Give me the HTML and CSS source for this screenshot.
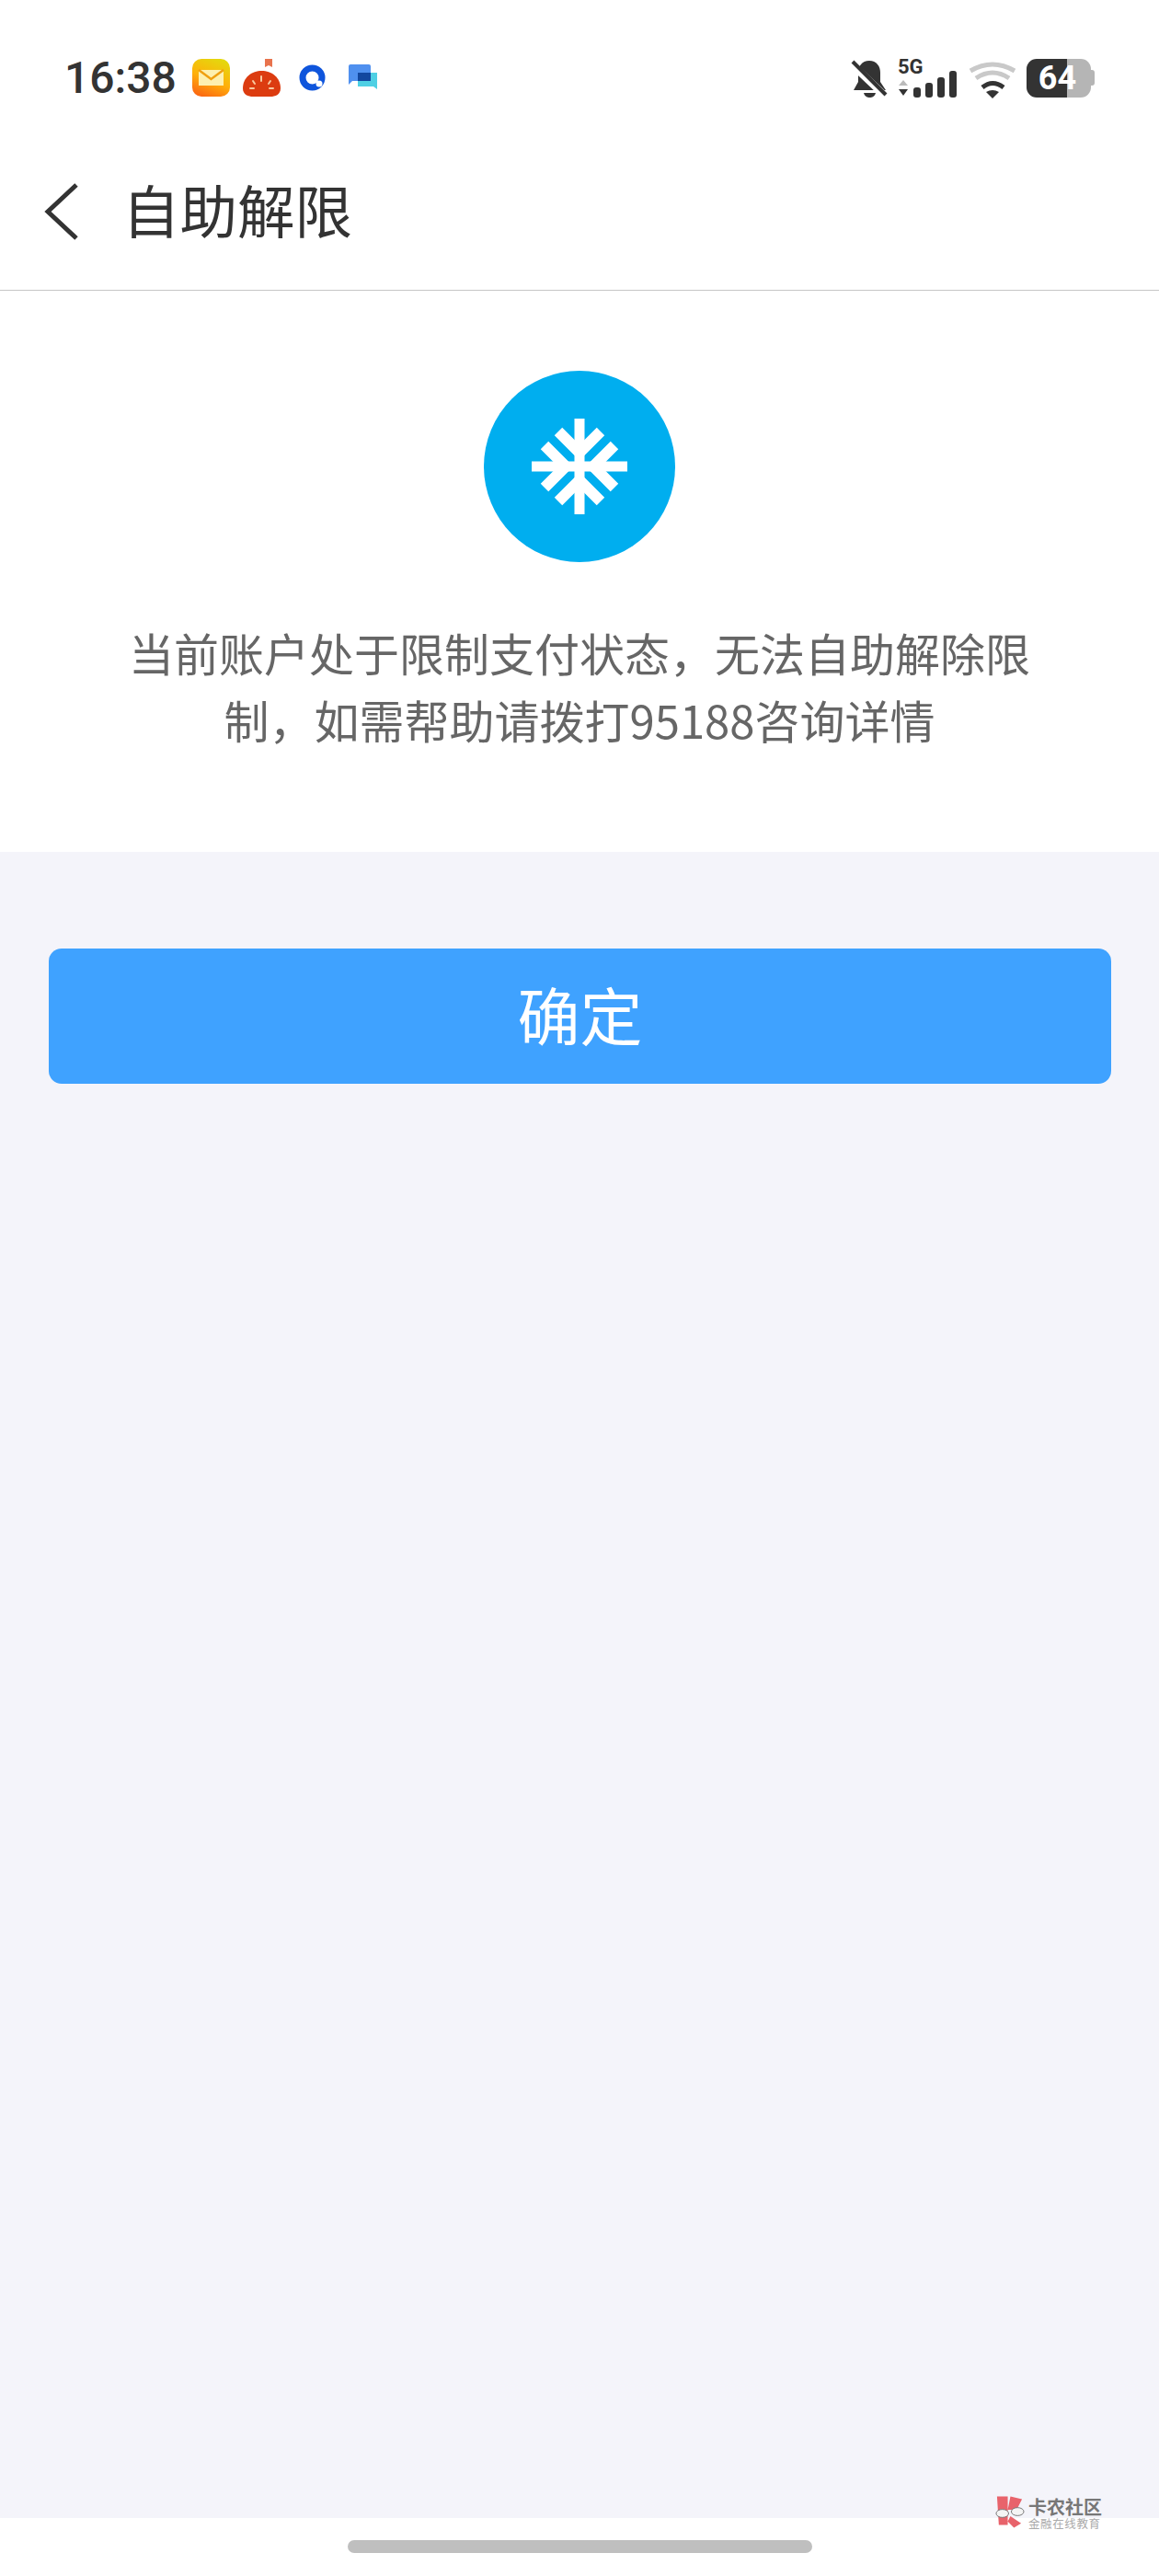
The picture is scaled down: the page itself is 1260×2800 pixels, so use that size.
FILE: index.html
```html
<!doctype html>
<html>
<head>
    <meta charset="utf-8">
    <title>自助解限</title>
    <link rel="stylesheet" href="styles.css">
</head>

<body>
    <div class="status">
        <span class="time">16:38</span>
        <div class="apps">
            <svg class="app" viewBox="0 0 41 41">
                <defs>
                    <linearGradient id="mailbg" x1="0.7" y1="0" x2="0.3" y2="1">
                        <stop offset="0" stop-color="#e4d80e"/>
                        <stop offset="0.55" stop-color="#ffb00a"/>
                        <stop offset="1" stop-color="#fb6a12"/>
                    </linearGradient>
                </defs>
                <rect width="41" height="41" rx="10" fill="url(#mailbg)"/>
                <rect x="7" y="12" width="27" height="17" fill="#fdf0b0"/>
                <path d="M7 12 L20.5 22 L34 12" fill="none" stroke="#f0a010" stroke-width="2.5"/>
            </svg>
            <svg class="app" viewBox="0 0 41 41">
                <path d="M24 0 h8 v9 l-4 -2 l-4 2 z" fill="#e8734d"/>
                <path d="M0 32 C0 20 10 13 20.5 13 C31 13 41 20 41 32 C41 39 35 41 30 41 H11 C6 41 0 39 0 32 Z" fill="#dc3c10"/>
                <path d="M20 19 v5 M11 24 l2 3 M30 24 l-2 3 M8 32 h4 M29 32 h4" stroke="#f8c9a0" stroke-width="2" stroke-linecap="round"/>
            </svg>
            <svg class="app" viewBox="0 0 41 41">
                <circle cx="20.5" cy="20.5" r="10.5" fill="none" stroke="#0f55dc" stroke-width="7"/>
                <circle cx="28" cy="27" r="3.5" fill="#fff"/>
            </svg>
            <svg class="app" viewBox="0 0 41 41">
                <path d="M5 8 Q5 6 7 6 H27 Q29 6 29 8 V24 H9 L5 28 Z" fill="#4f90ef"/>
                <path d="M15 15 H36 V33 L32 30 H15 Z" fill="#4fd0e4"/>
                <path d="M15 15 H29 V24 H15 Z" fill="#12479f"/>
            </svg>
        </div>
        <div class="indicators">
            <svg class="bell" viewBox="0 0 42 44">
                <path d="M20 2 C28 2 32 8 32 15 V25 L38 34 H3 L8 25 V15 C8 8 12 2 20 2 Z" fill="#333"/>
                <path d="M14 37 H27 C26 41 23 42 20.5 42 C18 42 15 41 14 37 Z" fill="#333"/>
                <path d="M0 5 L37 40" stroke="#fff" stroke-width="8"/>
                <path d="M2 3 L38 39" stroke="#333" stroke-width="4"/>
            </svg>
            <svg class="signal" viewBox="0 -8 66 52">
                <text class="fiveg" x="0" y="16">5G</text>
                <path d="M1 29 L6 23 L11 29 Z" fill="#bbb"/>
                <path d="M1 33 H11 L6 40 Z" fill="#333"/>
                <rect x="17" y="31" width="8" height="11" rx="3" fill="#333"/>
                <rect x="30" y="26" width="8" height="16" rx="3" fill="#333"/>
                <rect x="43" y="20" width="8" height="22" rx="3" fill="#333"/>
                <rect x="56" y="13" width="8" height="29" rx="3" fill="#333"/>
            </svg>
            <svg class="wifi" viewBox="0 0 52 46">
                <path d="M2 13 Q26 -1 50 13" fill="none" stroke="#c9c9c9" stroke-width="5"/>
                <path d="M8 21 Q26 9 44 21" fill="none" stroke="#c9c9c9" stroke-width="5"/>
                <path d="M15 31 Q26 22 38 31" fill="none" stroke="#333" stroke-width="5"/>
                <path d="M19 36 Q26 32 33 36 L26 43 Z" fill="#333"/>
            </svg>
            <div class="battery"><span>64</span></div>
        </div>
    </div>

    <div class="nav">
        <svg class="back" viewBox="0 0 38 62">
            <path d="M35 2 L4 31 L35 60" fill="none" stroke="#333" stroke-width="5"/>
        </svg>
        <h1>自助解限</h1>
    </div>

    <div class="notice">
        <svg class="frozen" viewBox="-104 -104 208 208">
            <circle r="104" fill="#00aeef"/>
            <path d="M0 -52 V52 M-52 0 H52" stroke="#fff" stroke-width="11" fill="none"/>
            <path d="M-23 -38 L0 -15 L23 -38 M-23 38 L0 15 L23 38 M-38 -23 L-15 0 L-38 23 M38 -23 L15 0 L38 23" stroke="#fff" stroke-width="12" fill="none"/>
        </svg>
        <p>当前账户处于限制支付状态，无法自助解除限制，如需帮助请拨打95188咨询详情</p>
    </div>

    <div class="body">
        <button class="ok">确定</button>
    </div>

    <div class="footer">
        <div class="homebar"></div>
    </div>

    <div class="watermark">
        <svg class="wm-logo" viewBox="0 0 34 36">
            <path d="M3 0 H15 V32 H5 Z M18 0 L31 3 L25 15 H15 Z M18 22 L30 30 L22 35 L15 28 Z" fill="#e8636b"/>
            <ellipse cx="9" cy="19" rx="7" ry="4.5" fill="#f4f4f4" stroke="#777"/>
            <ellipse cx="26" cy="17" rx="7" ry="4.5" fill="#f4f4f4" stroke="#777"/>
        </svg>
        <div class="wm-text">
            <div class="wm-name">卡农社区</div>
            <div class="wm-sub">金融在线教育</div>
        </div>
    </div>
</body>
</html>
```

FILE: styles.css
```css
* {
  box-sizing: border-box;
}

html, body {
  margin: 0;
  padding: 0;
}

body {
  position: relative;
  height: 2800px;
  display: flex;
  flex-direction: column;
  background: #ffffff;
  font-family: "Noto Sans CJK SC", "Noto Sans", sans-serif;
}

/* status bar */
.status {
  height: 170px;
  padding: 64px 74px 0 70px;
  display: flex;
  align-items: flex-start;
}

.time {
  font: 500 48px/42px Roboto, sans-serif;
  color: #333333;
  width: 139px;
}

.apps {
  display: flex;
  gap: 14px;
}

.app {
  width: 41px;
  height: 41px;
}

.indicators {
  margin-left: auto;
  display: flex;
  align-items: flex-start;
}

.bell {
  width: 42px;
  height: 44px;
  margin-left: -1px;
}

.signal {
  width: 66px;
  height: 52px;
  margin: -8px 0 0 9px;
}

.fiveg {
  font: 700 22px Roboto, sans-serif;
  fill: #333333;
}

.wifi {
  width: 52px;
  height: 46px;
  margin-left: 11px;
}

.battery {
  position: relative;
  width: 70px;
  height: 42px;
  margin-left: 11px;
  padding-right: 3px;
  border-radius: 11px;
  background: linear-gradient(90deg, #333333 63%, #b5b5b5 63%);
  display: flex;
  align-items: center;
  justify-content: center;
  color: #ffffff;
  font: 700 36px Roboto, sans-serif;
}

.battery::after {
  content: "";
  position: absolute;
  right: -4px;
  top: 12px;
  width: 4px;
  height: 17px;
  border-radius: 0 3px 3px 0;
  background: #b5b5b5;
}

/* title */
.nav {
  height: 146px;
  padding: 0 0 25px 48px;
  border-bottom: 1px solid #c6c6c6;
  display: flex;
  align-items: center;
}

.back {
  width: 38px;
  height: 62px;
}

h1 {
  margin: 0 0 6px 47px;
  font-size: 62.5px;
  font-weight: 400;
  line-height: 70px;
  color: #333333;
}

/* frozen notice */
.notice {
  height: 610px;
  padding-top: 87px;
  display: flex;
  flex-direction: column;
  align-items: center;
}

.frozen {
  width: 208px;
  height: 208px;
}

.notice p {
  width: 1000px;
  margin: 61px 0 0 0;
  font-size: 49px;
  line-height: 73px;
  color: #666666;
  text-align: center;
}

.body {
  flex: 1;
  background: #f4f4fa;
  padding: 105px 52px 0 53px;
}

.ok {
  display: block;
  width: 100%;
  height: 147px;
  padding: 0 0 6px 0;
  border: 0;
  border-radius: 14px;
  background: #3fa2ff;
  color: #ffffff;
  font-family: inherit;
  font-size: 68px;
}

.footer {
  height: 63px;
  padding-top: 24px;
}

.homebar {
  width: 505px;
  height: 14px;
  margin: 0 auto;
  border-radius: 7px;
  background: #bfbfbf;
}

/* watermark sits over the page */
.watermark {
  position: absolute;
  left: 1081px;
  top: 2713px;
  display: flex;
  gap: 4px;
}

.wm-logo {
  width: 33px;
  height: 36px;
}

.wm-name {
  font-size: 20px;
  line-height: 23px;
  font-weight: 700;
  color: #777777;
}

.wm-sub {
  font-size: 12.5px;
  line-height: 14px;
  letter-spacing: 0.6px;
  color: #aaaaaa;
}
```
